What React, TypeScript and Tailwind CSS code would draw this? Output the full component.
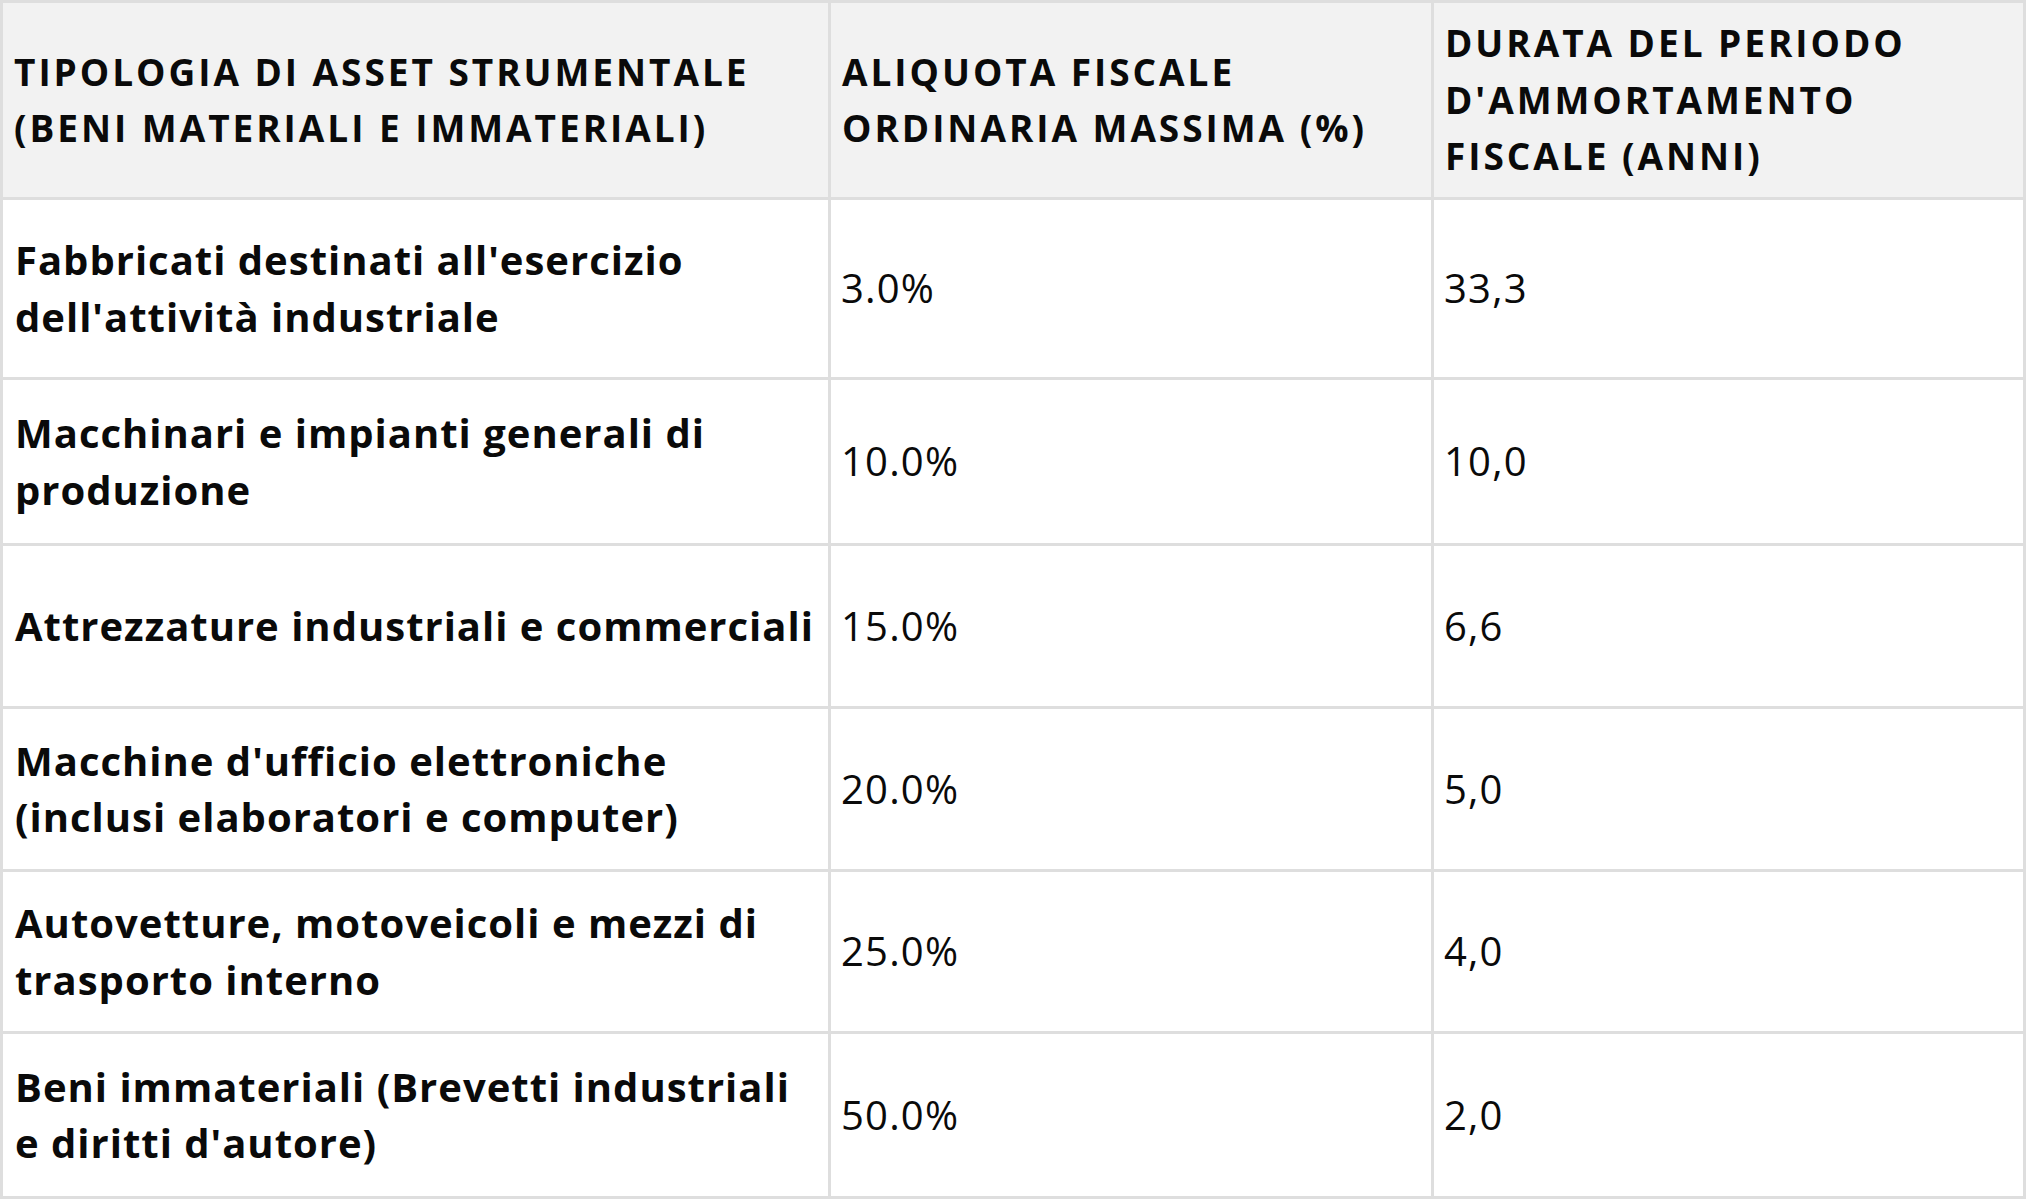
const headers = [
  ["TIPOLOGIA DI ASSET STRUMENTALE", "(BENI MATERIALI E IMMATERIALI)"],
  ["ALIQUOTA FISCALE", "ORDINARIA MASSIMA (%)"],
  ["DURATA DEL PERIODO", "D'AMMORTAMENTO", "FISCALE (ANNI)"],
];

const rows = [
  { asset: ["Fabbricati destinati all'esercizio", "dell'attività industriale"], rate: "3.0%", years: "33,3", h: "h-[180px]" },
  { asset: ["Macchinari e impianti generali di", "produzione"], rate: "10.0%", years: "10,0", h: "h-[166px]" },
  { asset: ["Attrezzature industriali e commerciali"], rate: "15.0%", years: "6,6", h: "h-[163px]" },
  { asset: ["Macchine d'ufficio elettroniche", "(inclusi elaboratori e computer)"], rate: "20.0%", years: "5,0", h: "h-[163px]" },
  { asset: ["Autovetture, motoveicoli e mezzi di", "trasporto interno"], rate: "25.0%", years: "4,0", h: "h-[162px]" },
  { asset: ["Beni immateriali (Brevetti industriali", "e diritti d'autore)"], rate: "50.0%", years: "2,0", h: "h-[165px]" },
];

const Lines = ({ lines }: { lines: string[] }) => (
  <>
    {lines.map((line, i) => (
      <span key={i} className="block whitespace-nowrap">
        {line}
      </span>
    ))}
  </>
);

const cell = "flex items-center border-r-[3px] border-b-[3px] border-[#dedede]";

export default function App() {
  return (
    <div className="w-[2026px] h-[1199px] bg-white text-[#0a0a0a] font-['Open_Sans','Liberation_Sans',sans-serif] [font-variant-ligatures:none]">
      <div className="grid grid-cols-[828px_603px_1fr] border-l-[3px] border-t-[3px] border-[#dedede]">
        {headers.map((lines, i) => (
          <div
            key={i}
            className={`${cell} h-[197px] bg-[#f2f2f2] pl-[11px] text-[37px] leading-[56.5px] font-bold uppercase tracking-[0.08em]`}
          >
            <div>
              <Lines lines={lines} />
            </div>
          </div>
        ))}

        {rows.map((row, i) => (
          <div key={i} className="contents">
            <div className={`${cell} ${row.h} pl-3 text-[40px] leading-[56.5px] font-bold tracking-[0.025em]`}>
              <div>
                <Lines lines={row.asset} />
              </div>
            </div>
            <div className={`${cell} ${row.h} pl-[10px] text-[40px] leading-[56.5px] font-medium tracking-[0.03em]`}>
              {row.rate}
            </div>
            <div className={`${cell} ${row.h} pl-[10px] text-[40px] leading-[56.5px] font-medium tracking-[0.03em]`}>
              {row.years}
            </div>
          </div>
        ))}
      </div>
    </div>
  );
}
